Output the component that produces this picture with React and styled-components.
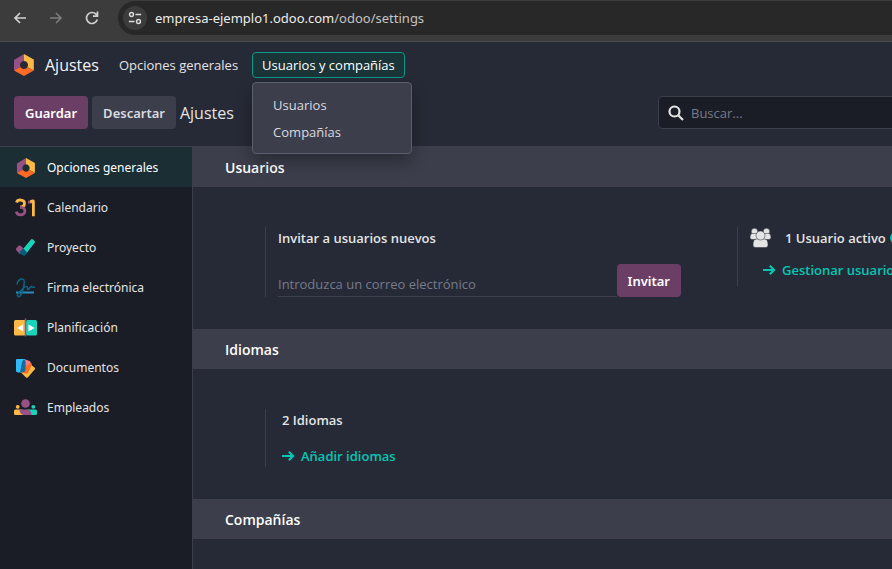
import React from "react";
import styled, { createGlobalStyle } from "styled-components";

const GlobalStyle = createGlobalStyle`
  *, *::before, *::after { box-sizing: border-box; }
  html, body, #root { height: 100%; }
  body {
    margin: 0;
    background: #262a36;
    color: #e4e4e4;
    font-family: "Segoe UI", "Open Sans", "Noto Sans", sans-serif;
    font-size: 13px;
    line-height: 20px;
  }
  button, input { font: inherit; color: inherit; }
`;

const Page = styled.div`
  display: flex;
  flex-direction: column;
  min-height: 100vh;
  overflow: hidden;
`;

const BrowserBar = styled.div`
  display: flex;
  align-items: center;
  gap: 16px;
  height: 42px;
  padding: 0 0 6px 10px;
  background: #3c3c3c;
  border-bottom: 1px solid #4a4b4f;
`;

const IconButton = styled.button`
  display: grid;
  place-items: center;
  width: 20px;
  height: 20px;
  padding: 0;
  border: 0;
  background: none;
  color: ${(p) => (p.$dim ? "#7c7c7c" : "#d0d0d0")};
`;

const Address = styled.div`
  display: flex;
  flex: 1;
  align-items: center;
  gap: 8px;
  height: 34px;
  padding-left: 5px;
  border-radius: 17px 0 0 17px;
  background: #282828;
`;

const SiteInfo = styled.button`
  display: grid;
  place-items: center;
  width: 24px;
  height: 24px;
  padding: 0;
  border: 0;
  border-radius: 50%;
  background: #3c3c3c;
  color: #dcdcdc;
`;

const Url = styled.span`
  color: #c4c4c4;
  font-family: "Segoe UI", "Noto Sans", sans-serif;
  font-size: 13px;
  b { color: #ececec; font-weight: 400; }
`;

const Navbar = styled.header`
  display: flex;
  align-items: center;
  height: 46px;
  padding-left: 13px;
`;

const AppName = styled.a`
  display: flex;
  align-items: center;
  gap: 10px;
  margin-right: 6px;
  color: #f4f4f4;
  font-size: 16px;
  text-decoration: none;
`;

const MenuHolder = styled.div`
  position: relative;
`;

const NavButton = styled.button`
  height: 26px;
  margin-left: 4px;
  padding: 0 9px;
  border: 1px solid ${(p) => (p.$open ? "#0a9a8a" : "transparent")};
  border-radius: 4px;
  background: ${(p) => (p.$open ? "#1b3438" : "none")};
  color: ${(p) => (p.$open ? "#ffffff" : "#e4e4e4")};
  line-height: 20px;
`;

const Dropdown = styled.div`
  position: absolute;
  z-index: 5;
  top: 30px;
  left: 4px;
  display: flex;
  flex-direction: column;
  width: 160px;
  padding: 8px 0;
  border: 1px solid #5b5e6c;
  border-radius: 4px;
  background: #3c3e4b;
  box-shadow: 0 8px 16px rgba(0, 0, 0, 0.3);
`;

const DropdownItem = styled.a`
  padding: 4px 20px 3px;
  color: #d9dae0;
  text-decoration: none;
`;

const ControlPanel = styled.div`
  display: grid;
  grid-template-columns: minmax(644px, 1fr) minmax(420px, 1fr);
  align-items: start;
  height: 58px;
  padding: 8px 14px 0;
`;

const Actions = styled.div`
  display: flex;
  align-items: center;
  gap: 4px;
`;

const Button = styled.button`
  height: 33px;
  padding: 0 11px;
  border: 0;
  border-radius: 4px;
  background: ${(p) => (p.$primary ? "#6b3e66" : "#3c3e4b")};
  color: ${(p) => (p.$primary ? "#ffffff" : "#d9dae0")};
  font-family: "Segoe UI", "Noto Sans", sans-serif;
  font-weight: 600;
`;

const Crumb = styled.span`
  font-size: 16px;
`;

const SearchBox = styled.label`
  display: flex;
  align-items: center;
  gap: 7px;
  height: 33px;
  padding: 0 9px;
  border: 1px solid #3c3e4b;
  border-radius: 4px;
  background: #1b1d26;
`;

const TextInput = styled.input`
  flex: 1;
  min-width: 0;
  padding: 0;
  border: 0;
  outline: 0;
  background: none;
  &::placeholder { color: #767a89; opacity: 1; }
`;

const Body = styled.div`
  display: flex;
  flex: 1;
  border-top: 1px solid #3c3e4b;
`;

const Sidebar = styled.nav`
  flex: none;
  width: 193px;
  border-right: 1px solid #3c3e4b;
  background: #1b1d26;
`;

const Tab = styled.a`
  display: flex;
  align-items: center;
  gap: 9px;
  height: 40px;
  padding: 1px 0 0 14px;
  background: ${(p) => (p.$active ? "#1b2e33" : "none")};
  color: ${(p) => (p.$active ? "#ffffff" : "#e4e4e4")};
  font-family: "Segoe UI", "Noto Sans", sans-serif;
  font-size: 12px;
  text-decoration: none;
`;

const Main = styled.main`
  flex: 1;
  min-width: 0;
  overflow: hidden;
`;

const SectionTitle = styled.h2`
  margin: 0;
  padding: 11px 32px 9px;
  background: #3c3e4b;
  color: #ffffff;
  font-size: 14px;
  font-weight: 600;
  line-height: 20px;
`;

const Settings = styled.div`
  display: grid;
  grid-template-columns: repeat(2, minmax(472px, 1fr));
  align-items: start;
  padding: 40px 32px 32px 72px;
`;

const Setting = styled.section`
  display: flex;
  flex-direction: column;
  gap: ${(p) => (p.$tight ? "12px" : "16px")};
  padding: 1px 0 ${(p) => p.$bottom || "0"} ${(p) => p.$indent || "12px"};
  border-left: 1px solid #3c3e4b;
`;

const Label = styled.h3`
  display: flex;
  align-items: center;
  gap: 4px;
  margin: 0;
  font-size: 13px;
  font-weight: 600;
  white-space: nowrap;
  svg:first-child { margin-right: 10px; }
`;

const InviteRow = styled.div`
  display: flex;
  max-width: 403px;
`;

const EmailField = styled(TextInput)`
  height: 33px;
  padding-top: 8px;
  border-bottom: 1px solid #3c3e4b;
`;

const ActionLink = styled.a`
  display: flex;
  align-items: center;
  gap: 6px;
  padding-left: ${(p) => (p.$inset ? "13px" : "0")};
  color: #02c7b5;
  font-weight: 600;
  text-decoration: none;
  white-space: nowrap;
`;

const Stroke = ({ size = 16, width = 2, children }) => (
  <svg width={size} height={size} viewBox="0 0 16 16" fill="none" stroke="currentColor" strokeWidth={width} aria-hidden="true">
    {children}
  </svg>
);

const ArrowIcon = () => (
  <svg width="13" height="14" viewBox="0 0 13 14" fill="none" stroke="currentColor" strokeWidth="2.2" aria-hidden="true">
    <path d="M0 7h11M6.800 2.700 11.100 7l-4.300 4.300" />
  </svg>
);

const SettingsIcon = ({ size = 22 }) => (
  <svg width={size} height={size === 24 ? 20 : 22} viewBox="0 0 22 22" aria-hidden="true">
    <path d="M11 0v7a4 4 0 0 0-3.500 6L1.800 16.600 1 16V6z" fill="#985184" />
    <path d="M11 0l9.800 5.500v11L14.500 13A4 4 0 0 0 11 7z" fill="#fbb945" />
    <path d="M1 16.500L7.500 13a4 4 0 0 0 7 0l6.300 3.500L11 22z" fill="#fc6b26" />
  </svg>
);

const CalendarIcon = () => (
  <svg width="24" height="22" viewBox="0 0 24 22" fill="none" strokeWidth="2.800" aria-hidden="true">
    <path d="M2.500 5.500C3.500 2 10.500 2.200 10.500 6.200c0 2.500-1.500 3.800-4.500 3.800" stroke="#fbb945" />
    <path d="M6 10.200c7 0 6 7.600.5 7.600-2.500 0-3.800-1.500-4.200-3.200" stroke="#985184" />
    <path d="M14 5.200h4" stroke="#985184" />
    <path d="M19.400 19.200V4.500q0-1-1.200-.5l-2 .8" stroke="#fbb945" />
  </svg>
);

const ProjectIcon = () => (
  <svg width="24" height="22" viewBox="0 0 24 22" aria-hidden="true">
    <path d="M2.300 11.200l2.200-2.400q1-.8 2 0l4 3.500-4.500 5-3.700-4.100q-.8-1 0-2z" fill="#985184" />
    <path d="M6 14.500l4-3.500 4 4-3 3.500q-1 .8-2 0L5.500 16z" fill="#005e7a" />
    <path d="M9.500 11.500L17 2.500q1-1 2 0l1.500 1.500q1 1 0 2L13 15.500z" fill="#1ad3bb" />
  </svg>
);

const SignIcon = () => (
  <svg width="24" height="22" viewBox="0 0 24 22" fill="none" strokeWidth="1.500" aria-hidden="true">
    <path d="M2 15.500h18" stroke="#2b8bc4" strokeWidth="2" />
    <path d="M3 7.500C3 3 7.500 1 9.500 2.500S9 15.500 6.500 18.500s-4-.5-2-2.500c3-3 7-7.500 8.500-6.500s-.5 3 1 3 2-3.500 3.500-3 .5 1.500 3.500.5" stroke="#0b6684" />
  </svg>
);

const PlanningIcon = () => (
  <svg width="24" height="22" viewBox="0 0 24 22" aria-hidden="true">
    <rect y="3" width="12" height="15.500" rx="1.500" fill="#fbb945" />
    <rect x="12" y="3" width="11" height="15.500" rx="1.500" fill="#1ad3bb" />
    <path d="M9 7.500v7L3 11zM14.500 7.500v7l6-3.500z" fill="#fff" />
    <path d="M11.500 1.500v18" stroke="#985184" strokeWidth="1.500" />
  </svg>
);

const DocumentsIcon = () => (
  <svg width="24" height="22" viewBox="0 0 24 22" aria-hidden="true">
    <path d="M15.500 6.500l5 4q1 .8.300 1.800L14 20.200q-1 1-2 .3L6.500 15z" fill="#fbb945" />
    <path d="M10 3l6.500 2.500q2 1 1.300 2.500L14 15.500q-.8 1.500-2.500 1L7 15z" fill="#fc6b26" />
    <path d="M10 2l5.500 2q1.200.5 1 2L12.500 9z" fill="#f37c8b" />
    <path d="M3 2h8L8 15.500H4q-2 0-2-2V3q0-1 1-1z" fill="#2ebcfa" />
    <path d="M9.500 2.500q2 0 2 2V12q0 3.500-4 3.500H6L8 5z" fill="#1a6c96" />
  </svg>
);

const EmployeesIcon = () => (
  <svg width="24" height="22" viewBox="0 0 24 22" aria-hidden="true">
    <circle cx="11.500" cy="6.500" r="4.300" fill="#985184" />
    <circle cx="3.700" cy="9.800" r="1.900" fill="#fbb945" />
    <circle cx="19.300" cy="9.800" r="1.900" fill="#1ad3bb" />
    <path d="M0 14q0-1.500 1.500-1.500H8L13 18H1.500Q0 18 0 16.500z" fill="#fbb945" />
    <path d="M23 14q0-1.500-1.500-1.500H13L10 18h11.500q1.500 0 1.500-1.500z" fill="#1ad3bb" />
    <path d="M5.500 12.500h6.500c4 0 5.500 2 5.500 5.500h-7c-3 0-5-2-5-5.500z" fill="#985184" />
  </svg>
);

const UsersIcon = () => (
  <svg width="21" height="20" viewBox="0 0 21 20" fill="#e4e4e4" stroke="#262a36" strokeWidth="0.500" aria-hidden="true">
    <circle cx="4.500" cy="3.500" r="3.200" />
    <circle cx="16.500" cy="3.500" r="3.200" />
    <path d="M2.500 5.500h4q1.500 0 1.500 2v4H2Q0 11.500 0 9.500 0 5.500 2.500 5.500zM18.500 5.500h-4q-1.500 0-1.500 2v4h6q2 0 2-2Q21 5.500 18.500 5.500z" />
    <path d="M6.500 11h8q3.500 0 3.500 6 0 2.500-2.500 2.500h-10Q3 19.500 3 17q0-6 3.500-6z" />
    <circle cx="10.500" cy="7.500" r="4.500" />
  </svg>
);

const HelpIcon = () => (
  <svg width="12" height="12" viewBox="0 0 12 12" aria-hidden="true">
    <circle cx="6" cy="6" r="6" fill="#02c7b5" />
    <path d="M4 4.500C4 2 8 2 8 4.500 8 6 6 5.800 6 7.500M6 8.500V10" fill="none" stroke="#262a36" strokeWidth="1.500" />
  </svg>
);

const TABS = [
  ["Opciones generales", SettingsIcon],
  ["Calendario", CalendarIcon],
  ["Proyecto", ProjectIcon],
  ["Firma electrónica", SignIcon],
  ["Planificación", PlanningIcon],
  ["Documentos", DocumentsIcon],
  ["Empleados", EmployeesIcon],
];

export default function App() {
  return (
    <Page>
      <GlobalStyle />
      <BrowserBar>
        <IconButton aria-label="Atrás">
          <Stroke width={1.7}><path d="M14 8H3M8 3L3 8l5 5" /></Stroke>
        </IconButton>
        <IconButton aria-label="Adelante" $dim>
          <Stroke width={1.7}><path d="M2 8h11M8 3l5 5-5 5" /></Stroke>
        </IconButton>
        <IconButton aria-label="Recargar">
          <Stroke width={1.7}><path d="M13.300 9.500A5.500 5.500 0 1 1 12 4.200l1.500 1.600M13.500 1.500v4.600H9" /></Stroke>
        </IconButton>
        <Address>
          <SiteInfo aria-label="Información del sitio">
            <Stroke size={14} width={1.7}><circle cx="4" cy="4" r="2.200" /><path d="M8.500 4H15M1 12h6.500" /><circle cx="12" cy="12" r="2.200" /></Stroke>
          </SiteInfo>
          <Url><b>empresa-ejemplo1.odoo.com</b>/odoo/settings</Url>
        </Address>
      </BrowserBar>

      <Navbar>
        <AppName href="#ajustes"><SettingsIcon />Ajustes</AppName>
        <NavButton>Opciones generales</NavButton>
        <MenuHolder>
          <NavButton $open aria-haspopup="menu" aria-expanded="true">Usuarios y compañías</NavButton>
          <Dropdown>
            <DropdownItem href="#usuarios">Usuarios</DropdownItem>
            <DropdownItem href="#companias">Compañías</DropdownItem>
          </Dropdown>
        </MenuHolder>
      </Navbar>

      <ControlPanel>
        <Actions>
          <Button $primary>Guardar</Button>
          <Button>Descartar</Button>
          <Crumb>Ajustes</Crumb>
        </Actions>
        <SearchBox>
          <Stroke width={2.2}><circle cx="6.500" cy="6.500" r="5" /><path d="M10.200 10.200L15 15" /></Stroke>
          <TextInput type="search" placeholder="Buscar..." aria-label="Buscar" />
        </SearchBox>
      </ControlPanel>

      <Body>
        <Sidebar>
          {TABS.map(([name, Icon], i) => (
            <Tab key={name} href={`#tab-${i}`} $active={i === 0}>
              <Icon size={24} />{name}
            </Tab>
          ))}
        </Sidebar>
        <Main>
          <SectionTitle>Usuarios</SectionTitle>
          <Settings>
            <Setting>
              <Label as="label" htmlFor="email">Invitar a usuarios nuevos</Label>
              <InviteRow>
                <EmailField id="email" type="email" placeholder="Introduzca un correo electrónico" />
                <Button $primary>Invitar</Button>
              </InviteRow>
            </Setting>
            <Setting $tight $bottom="6px">
              <Label><UsersIcon />1 Usuario activo <HelpIcon /></Label>
              <ActionLink href="#gestionar" $inset><ArrowIcon />Gestionar usuarios</ActionLink>
            </Setting>
          </Settings>
          <SectionTitle>Idiomas</SectionTitle>
          <Settings>
            <Setting $indent="16px" $bottom="1px">
              <Label>2 Idiomas</Label>
              <ActionLink href="#idiomas"><ArrowIcon />Añadir idiomas</ActionLink>
            </Setting>
          </Settings>
          <SectionTitle>Compañías</SectionTitle>
        </Main>
      </Body>
    </Page>
  );
}
